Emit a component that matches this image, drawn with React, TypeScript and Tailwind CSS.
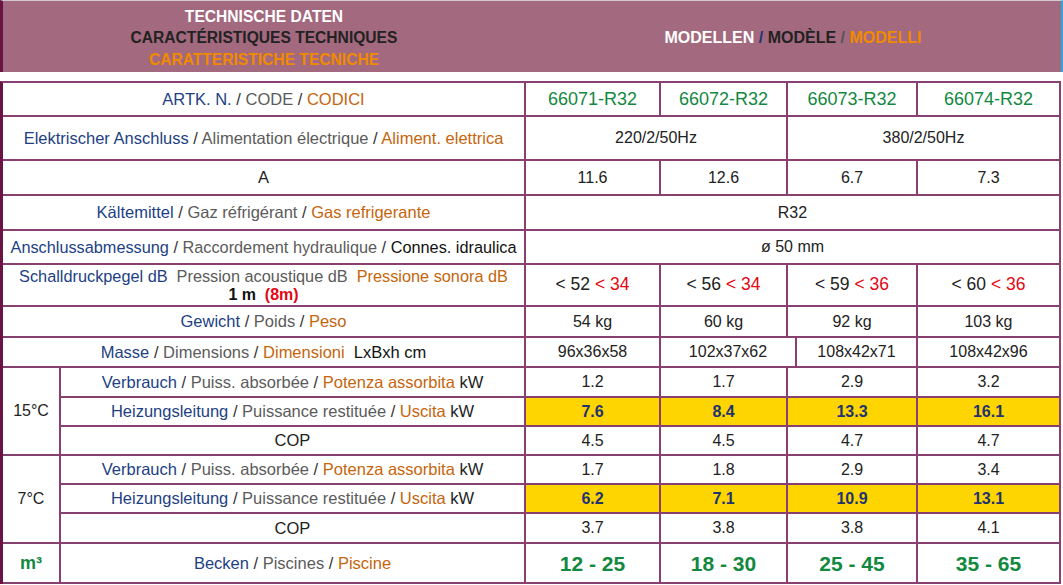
const cell = "flex items-center justify-center border-r-2 border-b-2 border-[#87406f] text-center";
const blue = "text-[#223f84]";
const grey = "text-[#5b5b5b]";
const orange = "text-[#c6650c]";

function Label({ de, fr, it, unit }: { de: string; fr: string; it: string; unit?: string }) {
  return (
    <span className="text-[16.5px]">
      <span className={blue}>{de}</span>
      <span className="text-[#333]"> / </span>
      <span className={grey}>{fr}</span>
      <span className="text-[#333]"> / </span>
      <span className={orange}>{it}</span>
      {unit && <span className="text-[#222]"> {unit}</span>}
    </span>
  );
}

function Values({ vals, hot }: { vals: string[]; hot?: boolean }) {
  return (
    <>
      {vals.map((v, i) => (
        <div
          key={i}
          className={
            hot
              ? `${cell} bg-[#ffd500] font-bold text-[16px] text-[#1f3370]`
              : `${cell} text-[#222]`
          }
        >
          {v}
        </div>
      ))}
    </>
  );
}

const noise = [
  ["52", "34"],
  ["56", "34"],
  ["59", "36"],
  ["60", "36"],
];

export default function App() {
  return (
    <div className="w-[1063px] bg-white font-['Liberation_Sans',Arial,sans-serif] text-[16px] leading-none">
      <header className="flex h-[72px] border-t border-l-[3px] border-r-2 border-t-[#d3c9ce] border-l-[#6a1446] border-r-[#2aa8e0] bg-[#a3697e] font-bold text-[16px]">
        <div className="flex w-[522px] flex-col items-center justify-center gap-[6px] pt-[3px] text-[15.6px]">
          <span className="text-white">TECHNISCHE DATEN</span>
          <span className="text-[#222]">CARACTÉRISTIQUES TECHNIQUES</span>
          <span className="text-[#f08a00]">CARATTERISTICHE TECNICHE</span>
        </div>
        <div className="flex flex-1 items-center justify-center pt-[2px]">
          <span className="text-white">MODELLEN</span>
          <span className="text-[#1f3370]">&nbsp;/&nbsp;</span>
          <span className="text-[#222]">MODÈLE</span>
          <span className="text-[#555]">&nbsp;/&nbsp;</span>
          <span className="text-[#f08a00]">MODELLI</span>
        </div>
      </header>

      <div className="mt-[9px] grid w-[1061px] grid-cols-[58px_465px_135px_127px_130px_143px] grid-rows-[34px_44px_35px_35px_34px_42px_31px_30px_30px_29px_29px_29px_29px_30px_40px] border-t-2 border-l-[3px] border-t-[#87406f] border-l-[#6a1446]">
        <div className={`${cell} col-span-2`}>
          <Label de="ARTK. N." fr="CODE" it="CODICI" />
        </div>
        {["66071-R32", "66072-R32", "66073-R32", "66074-R32"].map((c) => (
          <div key={c} className={`${cell} text-[18px] text-[#13883f]`}>
            {c}
          </div>
        ))}

        <div className={`${cell} col-span-2`}>
          <Label de="Elektrischer Anschluss" fr="Alimentation électrique" it="Aliment. elettrica" />
        </div>
        <div className={`${cell} col-span-2 text-[#222]`}>220/2/50Hz</div>
        <div className={`${cell} col-span-2 text-[#222]`}>380/2/50Hz</div>

        <div className={`${cell} col-span-2 text-[16.5px] text-[#222]`}>A</div>
        <Values vals={["11.6", "12.6", "6.7", "7.3"]} />

        <div className={`${cell} col-span-2`}>
          <Label de="Kältemittel" fr="Gaz réfrigérant" it="Gas refrigerante" />
        </div>
        <div className={`${cell} col-span-4 text-[#222]`}>R32</div>

        <div className={`${cell} col-span-2`}>
          <span className="text-[16.3px]">
            <span className={blue}>Anschlussabmessung</span>
            <span className="text-[#333]"> / </span>
            <span className={grey}>Raccordement hydraulique</span>
            <span className="text-[#333]"> / </span>
            <span className="text-[#111]">Connes. idraulica</span>
          </span>
        </div>
        <div className={`${cell} col-span-4 text-[#222]`}>ø 50 mm</div>

        <div className={`${cell} col-span-2 flex-col gap-[3px] pt-[1px]`}>
          <span className="whitespace-pre text-[16.3px]">
            <span className={blue}>Schalldruckpegel dB</span>
            {"  "}
            <span className={grey}>Pression acoustique dB</span>
            {"  "}
            <span className={orange}>Pressione sonora dB</span>
          </span>
          <span className="whitespace-pre font-bold">
            <span className="text-[#111]">1 m</span>
            {"  "}
            <span className="text-[#e30613]">(8m)</span>
          </span>
        </div>
        {noise.map(([a, b]) => (
          <div key={a} className={`${cell} text-[17.5px]`}>
            <span className="text-[#222]">&lt; {a}</span>
            <span className="text-[#e30613]">&nbsp;&lt; {b}</span>
          </div>
        ))}

        <div className={`${cell} col-span-2`}>
          <Label de="Gewicht" fr="Poids" it="Peso" />
        </div>
        <Values vals={["54 kg", "60 kg", "92 kg", "103 kg"]} />

        <div className={`${cell} col-span-2`}>
          <span className="whitespace-pre">
            <Label de="Masse" fr="Dimensions" it="Dimensioni" />
            <span className="text-[16.5px] text-[#111]">{"  "}LxBxh cm</span>
          </span>
        </div>
        <div className="col-span-4 flex border-b-2 border-[#87406f] text-[#222]">
          <div className="flex w-[135px] items-center justify-center border-r-2 border-[#87406f]">96x36x58</div>
          <div className="flex w-[136px] items-center justify-center border-r-2 border-[#87406f]">102x37x62</div>
          <div className="flex w-[121px] items-center justify-center border-r-2 border-[#87406f]">108x42x71</div>
          <div className="flex flex-1 items-center justify-center border-r-2 border-[#87406f]">108x42x96</div>
        </div>

        <div className={`${cell} row-span-3 text-[#222]`}>15°C</div>
        <div className={cell}>
          <Label de="Verbrauch" fr="Puiss. absorbée" it="Potenza assorbita" unit="kW" />
        </div>
        <Values vals={["1.2", "1.7", "2.9", "3.2"]} />
        <div className={cell}>
          <Label de="Heizungsleitung" fr="Puissance restituée" it="Uscita" unit="kW" />
        </div>
        <Values hot vals={["7.6", "8.4", "13.3", "16.1"]} />
        <div className={`${cell} text-[16.5px] text-[#222]`}>COP</div>
        <Values vals={["4.5", "4.5", "4.7", "4.7"]} />

        <div className={`${cell} row-span-3 text-[#222]`}>7°C</div>
        <div className={cell}>
          <Label de="Verbrauch" fr="Puiss. absorbée" it="Potenza assorbita" unit="kW" />
        </div>
        <Values vals={["1.7", "1.8", "2.9", "3.4"]} />
        <div className={cell}>
          <Label de="Heizungsleitung" fr="Puissance restituée" it="Uscita" unit="kW" />
        </div>
        <Values hot vals={["6.2", "7.1", "10.9", "13.1"]} />
        <div className={`${cell} text-[16.5px] text-[#222]`}>COP</div>
        <Values vals={["3.7", "3.8", "3.8", "4.1"]} />

        <div className={`${cell} text-[18px] font-bold text-[#13883f]`}>m³</div>
        <div className={cell}>
          <Label de="Becken" fr="Piscines" it="Piscine" />
        </div>
        {["12 - 25", "18 - 30", "25 - 45", "35 - 65"].map((v) => (
          <div key={v} className={`${cell} text-[21px] font-bold text-[#13883f]`}>
            {v}
          </div>
        ))}
      </div>
    </div>
  );
}
